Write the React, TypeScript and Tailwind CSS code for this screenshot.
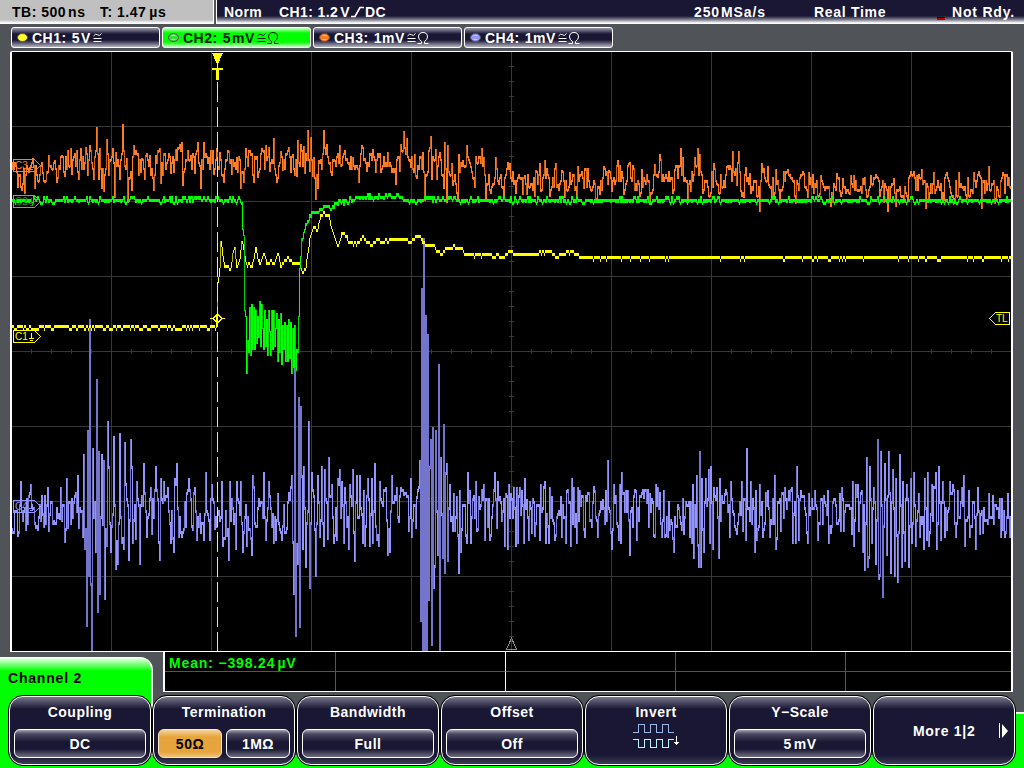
import React from "react";

type Point = [number, number]

const seeded = (seed: number) => () => {
    seed = (seed * 1664525 + 1013904223) % 4294967296
    return seed / 4294967296
}

// vertices of the noisy channels: x,y pairs, noise is filled in between
const CH4 = "21,481 31,484 48,487 61,487 67,478 78,475 84,454 88,430 90,319 93,448 97,379 99,451 102,454 104,460 108,421 109,466 114,436 120,433 125,442 131,439 132,466 137,481 144,463 151,487 156,466 161,478 164,481 168,487 177,463 175,478 189,478 195,487 206,472 212,484 222,481 230,481 237,481 241,481 253,475 264,472 269,481 278,493 292,475 295,360 299,397 301,406 302,475 304,466 309,421 312,472 318,475 322,466 325,469 329,457 332,484 338,478 340,469 342,481 345,487 350,484 353,469 357,475 360,475 364,490 368,478 372,478 375,463 380,481 386,487 392,475 397,487 401,487 404,493 411,478 417,496 420,460 430,466 431,439 433,427 436,430 439,364 441,457 444,424 446,472 447,463 450,484 454,493 457,496 460,490 468,472 470,490 476,481 479,496 484,484 486,498 495,472 498,481 500,496 506,493 509,484 511,493 514,487 517,487 520,487 522,490 525,478 527,499 541,484 545,481 550,487 552,496 561,496 567,490 572,478 574,487 578,487 580,490 587,499 595,490 603,499 606,490 608,460 614,484 620,484 622,472 626,490 628,490 636,490 644,496 650,493 656,484 658,487 664,490 693,484 697,475 700,451 702,478 706,478 709,469 711,466 714,487 717,487 720,478 725,493 731,481 742,481 747,448 751,481 756,490 760,484 768,490 775,475 785,487 789,490 792,487 797,466 801,490 809,493 815,490 828,490 840,493 842,487 853,481 856,484 858,484 862,490 867,457 870,466 874,487 878,439 881,451 885,463 889,451 893,469 896,478 900,454 903,481 907,484 911,478 914,472 919,493 925,478 928,472 932,484 936,472 939,466 943,481 950,481 953,484 958,490 962,487 964,475 969,490 978,487 989,493 1008,493 12,528 18,534 26,528 36,526 49,529 54,520 60,517 65,540 68,526 79,526 83,535 85,547 87,624 89,574 91,583 92,651 96,550 98,610 100,592 103,523 105,597 107,544 111,550 116,567 118,562 122,541 124,547 129,558 133,541 136,537 140,562 147,535 152,532 160,558 159,541 171,541 174,550 179,535 182,535 192,525 197,538 204,538 210,538 215,527 223,544 229,558 236,547 243,550 247,544 252,553 257,525 266,538 274,541 276,538 282,538 287,527 293,541 294,592 296,634 298,562 300,625 303,547 306,565 310,586 316,574 320,535 324,544 328,537 334,541 337,538 344,541 349,547 355,559 363,541 365,544 370,544 373,541 377,538 379,544 388,553 390,550 399,520 409,529 412,535 416,526 421,619 422,288 423,651 424,238 425,651 426,315 427,651 428,334 429,598 432,643 434,586 435,565 438,553 440,651 443,556 445,571 448,559 453,529 455,529 459,571 461,550 467,541 471,541 477,529 485,538 490,538 497,526 505,544 508,547 516,544 518,541 524,541 529,538 540,538 546,541 549,541 555,538 562,535 566,541 571,544 577,541 585,535 598,535 612,547 619,538 621,541 630,553 637,538 655,535 662,535 665,535 668,535 674,550 684,532 690,535 692,541 694,556 698,544 699,565 701,565 704,550 710,541 713,547 719,556 730,535 737,532 743,529 746,538 755,550 757,538 763,535 770,535 776,547 781,529 793,541 796,541 799,538 808,541 818,538 829,541 841,529 844,529 852,532 854,544 859,529 863,550 865,568 868,565 869,556 872,541 876,562 879,577 880,574 883,595 887,553 891,571 895,574 898,580 902,565 905,559 909,565 912,541 916,544 920,535 924,547 927,538 929,544 937,547 941,538 945,535 956,535 965,544 970,535 976,547 980,532 1001,535 1005,535 1010,535"

const CH3 = "16,165 27,165 33,158 49,155 55,160 62,155 68,150 71,148 77,150 81,148 87,153 90,145 97,127 100,148 107,139 113,148 116,152 123,124 127,158 134,145 142,158 146,155 150,155 156,155 160,148 165,153 176,149 182,142 188,150 191,155 198,142 204,142 209,157 213,150 217,148 220,152 229,151 237,157 246,148 251,154 256,158 262,148 266,145 269,147 274,138 281,151 289,147 293,154 298,140 304,146 308,130 311,137 314,157 319,160 324,130 327,144 335,160 340,145 347,158 353,157 362,145 365,158 373,149 379,156 388,152 397,159 401,144 404,131 407,138 415,154 423,152 431,136 436,149 440,152 445,142 448,145 452,163 459,154 463,160 467,145 471,166 476,156 482,148 484,157 496,157 507,168 510,163 525,175 536,170 540,163 545,160 556,163 562,170 570,172 578,166 585,168 604,166 609,170 618,160 629,163 642,169 655,164 660,154 675,169 681,148 683,157 695,157 698,148 700,154 714,163 727,166 733,151 739,151 746,167 750,173 762,163 768,166 776,169 784,171 788,169 800,177 804,173 809,172 821,175 837,173 843,178 851,175 854,175 863,178 871,175 877,176 894,178 910,175 917,175 922,169 934,172 947,172 959,172 974,172 980,175 989,166 1003,172 1008,184 18,186 25,192 35,187 43,172 57,181 65,175 72,173 79,178 88,174 94,178 99,178 102,187 104,190 109,174 115,196 120,178 128,201 132,189 141,171 145,178 154,189 161,182 171,172 183,184 195,172 201,187 214,173 218,166 224,181 232,173 241,187 244,181 254,181 258,176 270,170 277,181 283,169 291,171 297,175 305,172 310,170 313,175 316,198 318,187 322,168 331,171 342,164 350,168 359,181 367,170 376,171 385,165 392,171 396,183 400,170 411,166 416,175 425,199 432,178 437,178 444,187 447,201 453,184 458,199 475,186 486,199 491,192 504,195 516,192 523,193 527,193 535,195 541,190 550,195 558,184 565,196 577,198 584,187 597,201 600,193 612,190 624,193 641,192 650,201 658,176 673,192 688,199 691,190 703,192 711,192 718,184 725,186 737,184 741,190 744,196 760,210 757,195 769,184 775,192 780,199 796,202 808,196 820,193 831,205 840,190 850,193 858,190 867,196 888,210 896,205 908,199 926,207 935,192 944,199 955,202 966,194 982,207 995,202 1000,196"

// clean channels: x,y pairs joined by straight lines
const CH1 = "12,327 216,327 217,318 218,282 220,270 221,241 223,255 225,268 228,265 231,268 233,252 235,247 237,268 240,260 242,241 244,250 247,267 249,261 252,268 256,247 260,266 264,253 267,265 270,261 274,263 278,253 281,265 284,262 288,258 292,261 299,262 303,274 306,266 310,240 314,224 317,231 321,215 325,212 329,214 333,233 338,245 342,233 345,233 349,241 357,243 363,237 371,244 378,239 385,241 402,237 411,242 415,235 420,235 424,244 433,245 437,251 443,253 448,247 461,247 465,253 500,254 505,256 510,250 515,253 535,254 550,250 558,256 572,250 580,256 620,257 1011,257"
const CH2 = "12,200 242,199 243,228 244,234 245,310 246,318 247,373 248,340 249,352 250,307 251,355 252,304 253,349 254,309 255,349 256,310 257,345 258,313 259,340 260,301 261,345 262,305 264,350 265,308 266,345 267,318 268,357 269,310 270,330 271,352 272,312 273,350 274,310 275,345 277,311 278,363 279,320 280,350 281,310 282,366 283,322 284,350 285,319 286,358 287,325 288,358 289,319 290,360 291,322 292,370 293,328 294,368 295,325 296,368 297,350 298,350 299,315 300,270 301,255 302,240 304,230 306,222 310,216 316,211 325,207 333,205 340,202 350,199 365,196 380,196 390,194 400,196 405,199 1011,200"

const parse = (s: string): Point[] =>
    s.split(" ").map((p) => p.split(",").map(Number) as Point).sort((a, b) => a[0] - b[0])

// straight line between the vertices, one value for each column
const line = (pts: Point[]) => {
    const ys: number[] = []
    let i = 0
    for (let x = 11; x <= 1012; x++) {
        while (i < pts.length - 2 && pts[i + 1][0] <= x) i++
        const [x0, y0] = pts[i]
        const [x1, y1] = pts[i + 1]
        const t = Math.min(1, Math.max(0, (x - x0) / (x1 - x0)))
        ys.push(y0 + (y1 - y0) * t)
    }
    return ys
}

// pull is how far the filled in values lean to the center line
const noisy = (src: string, seed: number, center: (x: number) => number, pull: number, amp: number) => {
    const rnd = seeded(seed)
    const pts = parse(src)
    const map = new Map(pts)
    let last = 0
    return line(pts).map((y, i) => {
        const fixed = map.get(i + 11)
        if (fixed !== undefined) return fixed
        if (rnd() > 0.2) last = (rnd() - 0.5) * 2 * amp
        return Math.round((y * (1 - pull) + center(i + 11) * pull + last) / 3) * 3
    })
}

const clean = (src: string, seed: number, jitter: number) => {
    const rnd = seeded(seed)
    return line(parse(src)).map((y) => Math.round((y + (rnd() - 0.5) * jitter - 1) / 3) * 3 + 1)
}

// one 1px wide bar for each column, from the last value to this one
const bars = (ys: number[], pad: number) => {
    let bright = ""
    let dim = ""
    for (let i = 1; i < ys.length; i++) {
        const top = Math.min(ys[i - 1], ys[i])
        const diff = Math.abs(ys[i] - ys[i - 1])
        const h = Math.min(Math.max(diff + pad, 3), 651 - top)
        if (h <= 0) continue
        const d = `M${10 + i} ${top}h1v${h}h-1z`
        if (diff > 90 || (diff > 8 && i % 3 === 0)) dim += d
        else bright += d
    }
    return { bright, dim }
}

const drift = (x: number) => {
    if (x < 60) return 172
    if (x < 440) return 163
    if (x < 520) return 174
    return x < 740 ? 179 : 186
}

const TRACES = [
    { color: "#9494ff", shade: "#7474cc", ...bars(noisy(CH4, 7, () => 510, 0.75, 19), 3) },
    { color: "#ff7c24", shade: "#c86018", ...bars(noisy(CH3, 21, drift, 0.6, 11), 2) },
    { color: "#ffff00", shade: "#b4b400", ...bars(clean(CH1, 5, 3.2), 0) },
    { color: "#00ff00", shade: "#00d000", ...bars(clean(CH2, 11, 5.5), 1) },
]

const TAGS = [
    { name: "C3", y: 159, color: "#ff7c24", text: "#ff7c24" },
    { name: "C2", y: 195, color: "#00ff00", text: "#009800" },
    { name: "C1", y: 330, color: "#ffff00", text: "#ffff00" },
    { name: "C4", y: 500, color: "#9494ff", text: "#9494ff" },
]

const Ground = ({ x, y, color }: { x: number; y: number; color: string }) => (
    <path d={`M${x + 2.5} ${y}v5M${x} ${y + 5.5}h5M${x + 1} ${y + 7.5}h3`} stroke={color} fill="none" />
)

const Scope = () => {
    const cols = [111, 211, 311, 411, 511, 611, 711, 811, 911]
    const rows = [126, 201, 276, 351, 426, 501, 576]
    let ticks = ""
    for (let x = 31; x < 1011; x += 20) ticks += `M${x + 0.5} 349v5`
    for (let y = 66; y < 650; y += 15) ticks += `M509 ${y + 0.5}h5`
    return (
        <svg width="999" height="599" viewBox="12 52 999 599" className="block font-normal tracking-normal" shapeRendering="crispEdges">
            <path d={cols.map((x) => `M${x + 0.5} 52v599`).join("") + rows.map((y) => `M12 ${y + 0.5}h1000`).join("") + ticks} stroke="#373737" />
            {TRACES.map((t) => (
                <g key={t.color}>
                    <path d={t.bright} fill={t.color} />
                    <path d={t.dim} fill={t.shade} />
                </g>
            ))}
            <path d="M217.5 82V651" stroke="#ffff00" strokeDasharray="20 5" />
            <path d="M212 53h11l-5 11h-1z" fill="#ffff00" />
            <path d="M217 62h1v6h5v2h-4v10h-3v-10h-4v-2h5z" fill="#ffff00" />
            <path d="M210 318.5h3M222 318.5h3M213 318.5l4.5-4.5 4.5 4.5-4.5 4.5z" stroke="#ffff00" fill="none" />
            {TAGS.map((t) => (
                <g key={t.name}>
                    <path d={`M13.5 ${t.y + 0.5}h21l6 6-6 6h-21z`} stroke={t.color} fill="none" />
                    <text x="15" y={t.y + 10} fontSize="10" fill={t.text} fontFamily="Liberation Sans, sans-serif">{t.name}</text>
                    <Ground x={29} y={t.y + 3} color={t.text} />
                </g>
            ))}
            <path d="M1009.5 312.5h-14l-6 6 6 6h14z" stroke="#ffff00" fill="none" />
            <text x="996" y="322" fontSize="10" fill="#ffff00" fontFamily="Liberation Sans, sans-serif">TL</text>
            <path d="M511.5 638l5 11.5h-10z" stroke="#8c8c8c" fill="none" />
        </svg>
    )
}

const CHANNELS = [
    { name: "CH1:", num: "5", unit: "V", ohm: false, dot: "#ffff28" },
    { name: "CH2:", num: "5", unit: "mV", ohm: true, dot: "#3cdc3c" },
    { name: "CH3:", num: "1", unit: "mV", ohm: true, dot: "#ff7c24" },
    { name: "CH4:", num: "1", unit: "mV", ohm: true, dot: "#9494ff" },
]

const ChannelButton = ({ ch, active }: { ch: (typeof CHANNELS)[number]; active: boolean }) => (
    <div className={`flex h-[21px] w-[149px] items-center rounded-[3px] border border-white pl-[5px] ${active ? "bg-[linear-gradient(#c8ffc8_0,#00ff00_5px,#00ff00_14px,#c8ffc8_100%)] text-[#062006]" : "bg-[linear-gradient(#9a99ab_0,#191733_6px,#191733_12px,#b4b3c2_100%)] text-white"}`}>
        <svg width="11" height="9" className="mr-[4px] shrink-0">
            <ellipse cx="5.5" cy="4.5" rx="5" ry="4" fill={ch.dot} stroke="#555" />
            <path d="M3.5 2.5h4M3.5 6.5h4" stroke="#fff" strokeOpacity="0.5" />
        </svg>
        <span>{ch.name}</span>
        <span className="ml-[5px]">{ch.num}</span>
        <span className={ch.num === "5" ? "ml-[1px]" : ""}>{ch.unit}</span>
        <svg width="9" height="11" className="ml-[2px]" fill="none" stroke="currentColor">
            <path d="M0.5 4q2-3 4-1.2t4-1.3M0.5 6.500h8M0.5 9.500h8" />
        </svg>
        {ch.ohm && (
            <svg width="12" height="12" className="ml-px" fill="none" stroke="currentColor">
                <path d="M0.5 11.5h4v-2q-3-2-3-4.500q0-4.500 4.500-4.500t4.500 4.500q0 2.500-3 4.500v2h4" />
            </svg>
        )}
    </div>
)

const face = "bg-[linear-gradient(#a09fae_0,#4a4860_4px,#191733_12px,#191733_19px,#6f6e80_100%)]"

const Value = ({ children, on, wide }: { children: React.ReactNode; on?: boolean; wide?: boolean }) => (
    <div className={`flex h-[29px] items-center justify-center rounded-[6px] border ${wide ? "w-[132px]" : "w-[64px]"} ${on ? "border-[#ffe8b8] bg-[linear-gradient(#f4d49c_0,#e6a43c_7px,#e6a43c_22px,#f0c47c_100%)] text-black" : `border-white ${face}`}`}>
        {children}
    </div>
)

const Softkey = ({ title, children }: { title?: string; children: React.ReactNode }) => (
    <div className="h-[71px] w-[144px] shrink-0 rounded-[15px] border border-black bg-black">
        <div className="flex h-full w-full flex-col items-center rounded-[14px] border border-white bg-[linear-gradient(#77768a_0,#191733_12px,#191733_58px,#3c3a54_100%)]">
            {title && <p className="mt-[6px] h-[18px] leading-[18px]">{title}</p>}
            {children}
        </div>
    </div>
)

const App = () => {
    return (
        <div className="flex h-[768px] w-[1024px] flex-col overflow-hidden bg-[#505458] font-['Liberation_Sans',sans-serif] text-[14px] font-bold leading-none tracking-[0.5px] text-white">
            <div className="flex h-[24px] shrink-0 gap-[2px]">
                <div className="flex w-[214px] items-center whitespace-pre border-r border-white bg-[linear-gradient(#c0c0c0_20px,#ffffff_23px)] pl-[12px] text-black">
                    <span className="w-[88px]">TB: 500<span className="ml-[2px]">ns</span></span>
                    <span>T: 1.47<span className="ml-[3px]">µs</span></span>
                </div>
                <div className="flex flex-1 items-center whitespace-pre border-l border-white bg-[linear-gradient(#191733_16px,#8a899a_20px,#ffffff_23px)] pl-[7px] tracking-[0.4px]">
                    <span className="w-[55px]">Norm</span>
                    <span>CH1: 1.2<span className="ml-[2px]">V</span></span>
                    <svg width="14" height="12" className="ml-px" fill="none" stroke="#fff" strokeWidth="1.6">
                        <path d="M0 10.500h4l5-9h4" />
                    </svg>
                    <span className="w-[329px]">DC</span>
                    <span className="w-[120px] tracking-[0.9px]">250<span className="ml-[1px]">MSa/s</span></span>
                    <span className="w-[123px] tracking-[0.7px]">Real Time</span>
                    <span className="mr-[7px] mt-[12px] h-[3px] w-[8px] border-t border-black bg-[#b40000]" />
                    <span className="tracking-[0.8px]">Not Rdy.</span>
                </div>
            </div>
            <div className="flex h-[27px] shrink-0 gap-[2px] pl-[11px] pt-[3px]">
                {CHANNELS.map((ch) => <ChannelButton key={ch.name} ch={ch} active={ch.name === "CH2:"} />)}
            </div>
            <div className="ml-[10px] h-[601px] w-[1003px] shrink-0 rounded-t-[2px] border-x-2 border-y border-white bg-black">
                <Scope />
            </div>
            <div className="flex h-[43px] shrink-0">
                <div className="mt-[5px] h-[38px] w-[153px] rounded-tr-[13px] border-r-2 border-white bg-[linear-gradient(#ffffff_0,#00ff00_14px)] pl-[8px] pt-[14px] tracking-[0.8px] text-black">Channel 2</div>
                <div className="ml-[10px] grid h-[40px] w-[850px] grid-cols-[171px_170px_170px_170px_1fr] grid-rows-[20px_1fr] border-b border-l-2 border-r-2 border-white bg-black">
                    {Array.from({ length: 10 }, (_, i) => (
                        <div key={i} className={`whitespace-nowrap pl-[4px] pt-[4px] text-[#00ff00] ${i < 5 ? "border-b border-b-[#555]" : ""} ${i % 5 === 4 ? "" : i % 5 === 1 ? "border-r border-r-white" : "border-r border-r-[#555]"}`}>
                            {i === 0 && <span className="tracking-[0.85px]">Mean: −398.24<span className="ml-[2px]">µV</span></span>}
                        </div>
                    ))}
                </div>
            </div>
            <div className="relative flex h-[73px] shrink-0 pl-[8px]">
                <div className="absolute left-0 top-0 h-full w-[153px] rounded-br-[3px] border-r-2 border-white bg-[#00ff00]" />
                <div className="absolute right-0 top-[17px] h-[56px] w-[20px] border-t-2 border-white bg-[#00ff00]" />
                <div className="absolute bottom-0 left-0 h-[13px] w-full bg-[#00ff00]" />
                <div className="relative flex">
                    <Softkey title="Coupling"><div className="mt-[8px]"><Value wide>DC</Value></div></Softkey>
                    <Softkey title="Termination">
                        <div className="mt-[8px] flex gap-[4px]">
                            <Value on>50Ω</Value>
                            <Value>1MΩ</Value>
                        </div>
                    </Softkey>
                    <Softkey title="Bandwidth"><div className="mt-[8px]"><Value wide>Full</Value></div></Softkey>
                    <Softkey title="Offset"><div className="mt-[8px]"><Value wide>Off</Value></div></Softkey>
                    <Softkey title="Invert">
                        <svg width="48" height="26" viewBox="633 723 48 26" className="mt-[2px]" fill="none" shapeRendering="crispEdges">
                            <path d="M634 732.500h5.500v-8h6v8h6v-8h6v8h6v-8h6v8h5" stroke="#9cb8e8" />
                            <path d="M634 739.500h5.500v8h6v-8h6v8h6v-8h6v8h6v-8h5" stroke="#b8f4ff" />
                            <path d="M677.500 736v9M675 742.500h5M676 743.500h3" stroke="#fff" />
                        </svg>
                    </Softkey>
                    <Softkey title="Y−Scale"><div className="mt-[8px]"><Value wide>5<span className="ml-[2px]">mV</span></Value></div></Softkey>
                    <Softkey>
                        <div className="flex h-full w-full items-center pl-[39px]">
                            <span className="w-[86px] whitespace-nowrap tracking-[0.7px]">More 1|2</span>
                            <svg width="10" height="16"><path d="M0 0h1v15h-1zM3 1l6 7-6 7z" fill="#fff" /></svg>
                        </div>
                    </Softkey>
                </div>
            </div>
        </div>
    )
}

export default App
